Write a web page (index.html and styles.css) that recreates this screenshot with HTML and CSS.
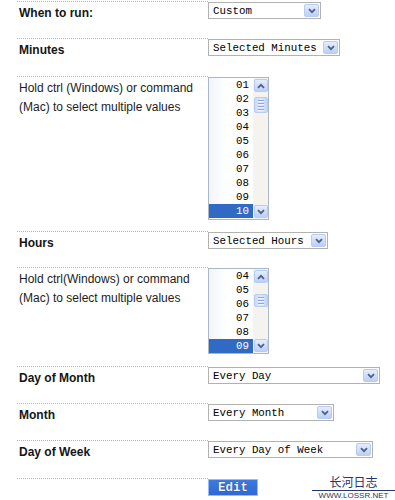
FILE: index.html
```html
<!DOCTYPE html>
<html>
<head>
<meta charset="utf-8">
<link rel="stylesheet" href="styles.css">
</head>
<body>
<div class="form">
  <div class="row h37">
    <div class="label strong">When to run:</div>
    <div class="field">
      <div class="select w113"><span>Custom</span><span class="dd"><svg width="8" height="6" viewBox="0 0 8 6"><polyline points="1,1.2 4,4.2 7,1.2" fill="none" stroke="#4d6185" stroke-width="1.8"/></svg></span></div>
    </div>
  </div>
  <div class="row h38">
    <div class="label strong">Minutes</div>
    <div class="field">
      <div class="select w132"><span>Selected Minutes</span><span class="dd"><svg width="8" height="6" viewBox="0 0 8 6"><polyline points="1,1.2 4,4.2 7,1.2" fill="none" stroke="#4d6185" stroke-width="1.8"/></svg></span></div>
    </div>
  </div>
  <div class="row h155">
    <div class="label">Hold ctrl (Windows) or command (Mac) to select multiple values</div>
    <div class="field">
      <div class="listbox list1">
        <div class="options">
          <div class="opt">01</div><div class="opt">02</div><div class="opt">03</div><div class="opt">04</div><div class="opt">05</div>
          <div class="opt">06</div><div class="opt">07</div><div class="opt">08</div><div class="opt">09</div><div class="opt sel">10</div>
        </div>
        <div class="scroll">
          <span class="sbtn"><svg width="8" height="6" viewBox="0 0 8 6"><polyline points="1,4.8 4,1.8 7,4.8" fill="none" stroke="#4d6185" stroke-width="1.8"/></svg></span>
          <span class="track"><span class="thumb t1"><i></i><i></i><i></i><i></i></span></span>
          <span class="sbtn"><svg width="8" height="6" viewBox="0 0 8 6"><polyline points="1,1.2 4,4.2 7,1.2" fill="none" stroke="#4d6185" stroke-width="1.8"/></svg></span>
        </div>
      </div>
    </div>
  </div>
  <div class="row h36">
    <div class="label strong">Hours</div>
    <div class="field">
      <div class="select w120"><span>Selected Hours</span><span class="dd"><svg width="8" height="6" viewBox="0 0 8 6"><polyline points="1,1.2 4,4.2 7,1.2" fill="none" stroke="#4d6185" stroke-width="1.8"/></svg></span></div>
    </div>
  </div>
  <div class="row h99">
    <div class="label">Hold ctrl(Windows) or command (Mac) to select multiple values</div>
    <div class="field">
      <div class="listbox list2">
        <div class="options">
          <div class="opt">04</div><div class="opt">05</div><div class="opt">06</div><div class="opt">07</div><div class="opt">08</div><div class="opt sel">09</div>
        </div>
        <div class="scroll">
          <span class="sbtn"><svg width="8" height="6" viewBox="0 0 8 6"><polyline points="1,4.8 4,1.8 7,4.8" fill="none" stroke="#4d6185" stroke-width="1.8"/></svg></span>
          <span class="track"><span class="thumb t2"><i></i><i></i><i></i></span></span>
          <span class="sbtn"><svg width="8" height="6" viewBox="0 0 8 6"><polyline points="1,1.2 4,4.2 7,1.2" fill="none" stroke="#4d6185" stroke-width="1.8"/></svg></span>
        </div>
      </div>
    </div>
  </div>
  <div class="row h37">
    <div class="label strong">Day of Month</div>
    <div class="field">
      <div class="select w172"><span>Every Day</span><span class="dd"><svg width="8" height="6" viewBox="0 0 8 6"><polyline points="1,1.2 4,4.2 7,1.2" fill="none" stroke="#4d6185" stroke-width="1.8"/></svg></span></div>
    </div>
  </div>
  <div class="row h37">
    <div class="label strong">Month</div>
    <div class="field">
      <div class="select w126"><span>Every Month</span><span class="dd"><svg width="8" height="6" viewBox="0 0 8 6"><polyline points="1,1.2 4,4.2 7,1.2" fill="none" stroke="#4d6185" stroke-width="1.8"/></svg></span></div>
    </div>
  </div>
  <div class="row h38">
    <div class="label strong">Day of Week</div>
    <div class="field">
      <div class="select w165"><span>Every Day of Week</span><span class="dd"><svg width="8" height="6" viewBox="0 0 8 6"><polyline points="1,1.2 4,4.2 7,1.2" fill="none" stroke="#4d6185" stroke-width="1.8"/></svg></span></div>
    </div>
  </div>
  <div class="row">
    <div class="label"></div>
    <div class="field">
      <button class="btn">Edit</button>
    </div>
  </div>
  <div class="wm">
    <div class="wm-cn">长河日志</div>
    <div class="wm-url">WWW.LOSSR.NET</div>
  </div>
</div>
</body>
</html>
```

FILE: styles.css
```css
html, body {
  margin: 0;
  background: #fff;
}
body {
  font-family: "Liberation Sans", Arial, sans-serif;
  font-size: 12px;
  color: #1c1c1c;
}
.form {
  position: relative;
  box-sizing: border-box;
  height: 500px;
  padding: 1px 0 0 17px;
}
.row {
  display: grid;
  grid-template-columns: 191px 1fr;
}
.h36 { height: 36px; }
.h37 { height: 37px; }
.h38 { height: 38px; }
.h99 { height: 99px; }
.h155 { height: 155px; }
.label {
  border-top: 1px dotted #b3b3b3;
  padding: 2px 2px 0 2px;
  line-height: 19px;
}
.label.strong {
  font-weight: bold;
  color: #151515;
}
.field {
  padding-top: 1px;
}
.select {
  display: flex;
  align-items: center;
  justify-content: space-between;
  box-sizing: border-box;
  height: 17px;
  border: 1px solid #b2b2b2;
  padding: 0 1px 0 4px;
  font-family: "Liberation Mono", "Courier New", monospace;
  font-size: 10.8px;
  color: #000;
  white-space: pre;
}
.w113 { width: 113px; }
.w120 { width: 120px; }
.w126 { width: 126px; }
.w132 { width: 132px; }
.w165 { width: 165px; }
.w172 { width: 172px; }
.dd, .sbtn {
  display: flex;
  align-items: center;
  justify-content: center;
  box-sizing: border-box;
  width: 15px;
  height: 13px;
  border: 1px solid #b8cbf2;
  border-radius: 2px;
  background: linear-gradient(#e6edfd, #bccff7);
}
.listbox {
  display: flex;
  box-sizing: border-box;
  width: 61px;
  border: 1px solid #a9b7c8;
  background: #fff;
}
.list1 { height: 143px; }
.list2 { height: 86px; }
.options {
  width: 44px;
  background: linear-gradient(90deg, #f0f4fa, #fff 40%);
}
.opt {
  height: 14px;
  line-height: 15px;
  text-align: right;
  padding-right: 4px;
  font-family: "Liberation Mono", "Courier New", monospace;
  font-size: 10.8px;
  color: #000;
}
.opt.sel {
  background: #316ac5;
  color: #fff;
}
.scroll {
  display: flex;
  flex-direction: column;
  width: 15px;
  padding: 1px 0 1px 1px;
  box-sizing: border-box;
  background: #f4f3ee;
}
.sbtn {
  width: 14px;
}
.track {
  flex: 1;
  display: flex;
  flex-direction: column;
}
.thumb {
  display: flex;
  flex-direction: column;
  align-items: center;
  justify-content: center;
  gap: 1px;
  box-sizing: border-box;
  width: 14px;
  border: 1px solid #b8cbf2;
  border-radius: 2px;
  background: linear-gradient(90deg, #cbdaf9, #dfe8fc 50%, #c3d4f8);
}
.thumb i {
  display: block;
  width: 6px;
  height: 1px;
  background: #8da6de;
  border-bottom: 1px solid #eef3fe;
}
.t1 { height: 16px; margin-top: 5px; }
.t2 { height: 13px; margin-top: 11px; }
.btn {
  display: block;
  box-sizing: border-box;
  width: 50px;
  height: 17px;
  margin: 0;
  padding: 0;
  border: 1px solid #98bcf3;
  background: linear-gradient(#3d7ae0, #2f69d2);
  color: #eef5ff;
  font-family: "Liberation Mono", "Courier New", monospace;
  font-weight: bold;
  font-size: 12.5px;
  line-height: 14px;
  text-shadow: 0 0 1px #0c2a66;
}
.wm {
  position: absolute;
  left: 312px;
  top: 474px;
  width: 83px;
  text-align: center;
  color: #24346c;
}
.wm-cn {
  font-family: "Noto Sans CJK SC", sans-serif;
  font-size: 12px;
  line-height: 16px;
  border-bottom: 1px solid #24346c;
}
.wm-url {
  font-family: "Liberation Sans", Arial, sans-serif;
  font-size: 8px;
  line-height: 9px;
}
```
